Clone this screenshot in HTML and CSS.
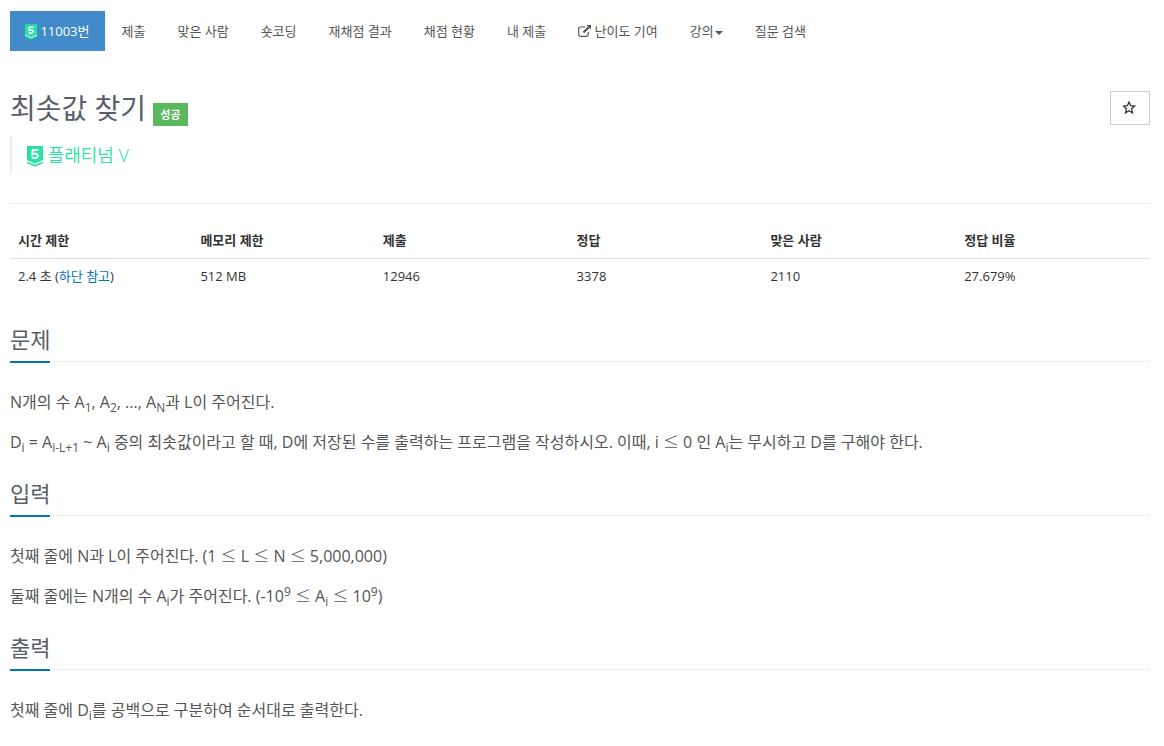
FILE: index.html
```html
<!DOCTYPE html>
<html lang="ko">
<head>
    <meta charset="UTF-8">
    <meta name="viewport" content="width=device-width, initial-scale=1.0">
    <title>11003번: 최솟값 찾기</title>
    <link rel="stylesheet" href="styles.css">
</head>
<body>
    <svg class="defs" aria-hidden="true">
        <symbol id="tier" viewBox="0 0 16 21">
            <path fill="#27e2a4" d="M0 0h16v15l-8 4-8-4z"/>
            <path class="tier-line" d="M0 14.500l8 3.500 8-3.500"/>
            <path fill="none" stroke="#27e2a4" stroke-width="1.500" d="M0 16.500l8 3.500 8-3.500"/>
            <path class="tier-five" d="M11.400 4H5.800L5.400 8.400C7.600 7.300 10.800 7.400 10.800 9.800c0 2.400-3.400 2.800-6 1.700"/>
        </symbol>
    </svg>

    <nav>
        <ul class="problem-menu">
            <li><a class="active" href="#"><svg class="tier-small"><use href="#tier"/></svg> 11003번</a></li>
            <li><a href="#">제출</a></li>
            <li><a href="#">맞은 사람</a></li>
            <li><a href="#">숏코딩</a></li>
            <li><a href="#">재채점 결과</a></li>
            <li><a href="#">채점 현황</a></li>
            <li><a href="#">내 제출</a></li>
            <li><a href="#"><svg class="external" viewBox="0 0 13 12"><path fill="none" stroke="currentColor" stroke-width="1.2" d="M7.500 2H2.500Q.700 2 .700 3.700v5.900q0 1.700 1.800 1.700h6q1.800 0 1.800-1.700V7"/><path fill="currentColor" d="M8.500 0H13v4.500l-1.500-1.500-5.300 5.300-1.500-1.500L10 1.500z"/></svg> 난이도 기여</a></li>
            <li><a href="#">강의<span class="caret"></span></a></li>
            <li><a href="#">질문 검색</a></li>
        </ul>
    </nav>

    <main>
        <header class="page-header">
            <div>
                <h1>최솟값 찾기 <span class="label">성공</span></h1>
                <blockquote><svg class="tier-big"><use href="#tier"/></svg> 플래티넘 V</blockquote>
            </div>
            <button class="favorite" type="button" aria-label="즐겨찾기">
                <svg viewBox="0 0 14 14"><path fill="none" stroke="currentColor" stroke-width="1.3" d="M6 1l1.600 3.700 4 .4-3 2.700.9 4L6 9.700l-3.500 2.100.9-4-3-2.700 4-.4z"/></svg>
            </button>
        </header>

        <table>
            <thead>
                <tr>
                    <th class="narrow">시간 제한</th>
                    <th class="narrow">메모리 제한</th>
                    <th>제출</th>
                    <th>정답</th>
                    <th>맞은 사람</th>
                    <th>정답 비율</th>
                </tr>
            </thead>
            <tbody>
                <tr>
                    <td>2.4 초 (<a href="#">하단 참고</a>)</td>
                    <td>512 MB</td>
                    <td>12946</td>
                    <td>3378</td>
                    <td>2110</td>
                    <td>27.679%</td>
                </tr>
            </tbody>
        </table>

        <section>
            <div class="headline"><h2>문제</h2></div>
            <p>N개의 수 A<sub>1</sub>, A<sub>2</sub>, ..., A<sub>N</sub>과 L이 주어진다.</p>
            <p>D<sub>i</sub> = A<sub>i-L+1</sub> ~ A<sub>i</sub> 중의 최솟값이라고 할 때, D에 저장된 수를 출력하는 프로그램을 작성하시오. 이때, i <span class="op">≤</span> 0 인 A<sub>i</sub>는 무시하고 D를 구해야 한다.</p>
        </section>

        <section>
            <div class="headline"><h2>입력</h2></div>
            <p>첫째 줄에 N과 L이 주어진다. (1 <span class="op">≤</span> L <span class="op">≤</span> N <span class="op">≤</span> 5,000,000)</p>
            <p>둘째 줄에는 N개의 수 A<sub>i</sub>가 주어진다. (-10<sup>9</sup> <span class="op">≤</span> A<sub>i</sub> <span class="op">≤</span> 10<sup>9</sup>)</p>
        </section>

        <section>
            <div class="headline"><h2>출력</h2></div>
            <p>첫째 줄에 D<sub>i</sub>를 공백으로 구분하여 순서대로 출력한다.</p>
        </section>
    </main>
</body>
</html>
```
FILE: styles.css
```css
* {
    box-sizing: border-box;
}

body {
    margin: 0;
    padding: 11px 14px 10px 10px;
    background-color: #fff;
    color: #333;
    font-family: "Open Sans", "Noto Sans CJK KR", sans-serif;
    font-size: 13px;
    line-height: 20px;
}

a {
    color: #0076c0;
    text-decoration: none;
}

.defs {
    position: absolute;
    width: 0;
    height: 0;
}

.tier-line {
    fill: none;
    stroke: #fff;
    stroke-width: 1;
}

.tier-five {
    fill: none;
    stroke: #fff;
    stroke-width: 2;
}

.problem-menu {
    display: flex;
    flex-wrap: wrap;
    gap: 2px;
    margin: 0;
    padding: 0;
    list-style: none;
}

.problem-menu a {
    display: block;
    padding: 10px 15px;
    color: #555;
}

.problem-menu .active {
    background-color: #428bca;
    color: #fff;
}

.tier-small {
    width: 12px;
    height: 16px;
    vertical-align: -4px;
}

.external {
    width: 13px;
    height: 12px;
    vertical-align: -1px;
}

.caret {
    display: inline-block;
    margin-left: 1px;
    border-top: 4px solid;
    border-right: 4px solid transparent;
    border-left: 4px solid transparent;
    vertical-align: 1px;
}

.page-header {
    display: flex;
    justify-content: space-between;
    align-items: flex-start;
    margin-top: 40px;
    padding-bottom: 29px;
    border-bottom: 1px solid #eee;
}

h1 {
    margin: 0 0 10px;
    color: #585f69;
    font-size: 28px;
    font-weight: 400;
    line-height: 35px;
}

.label {
    display: inline-block;
    padding: 0 7px;
    background-color: #5cb85c;
    color: #fff;
    font-size: 11px;
    font-weight: 700;
    line-height: 23px;
}

blockquote {
    margin: 0;
    padding: 7px 15px;
    border-left: 2px solid #eee;
    color: #27e2a4;
    font-size: 18px;
    font-weight: 350;
    line-height: 24px;
}

.tier-big {
    width: 16px;
    height: 21px;
    vertical-align: -5px;
}

.favorite {
    display: flex;
    align-items: center;
    justify-content: center;
    width: 40px;
    height: 34px;
    padding: 0;
    border: 1px solid #ccc;
    background-color: #fff;
    color: #333;
}

.favorite svg {
    width: 14px;
    height: 14px;
}

table {
    width: 100%;
    margin: 20px 0 30px;
    border-collapse: collapse;
    table-layout: fixed;
}

th,
td {
    padding: 7px 8px;
    text-align: left;
}

th {
    padding: 6px 8px 8px;
    border-bottom: 1px solid #ddd;
}

.narrow {
    width: 16%;
}

section {
    margin-bottom: 20px;
}

.headline {
    margin-bottom: 25px;
    border-bottom: 1px dotted #e0e0e0;
}

.headline h2 {
    display: inline-block;
    margin: 0 0 -2px;
    padding-bottom: 5px;
    border-bottom: 2px solid #0076c0;
    color: #585f69;
    font-size: 22px;
    font-weight: 400;
    line-height: 33px;
    vertical-align: top;
}

p {
    margin: 0 0 10px;
    color: #555;
    font-size: 16px;
    font-weight: 400;
    line-height: 30px;
}

.op {
    font-family: "Noto Sans CJK KR", sans-serif;
    font-weight: 300;
    line-height: 1;
}

sub,
sup {
    position: relative;
    font-size: 12px;
    line-height: 0;
    vertical-align: baseline;
}

sub {
    bottom: -4px;
}

sup {
    top: -6px;
}
```
